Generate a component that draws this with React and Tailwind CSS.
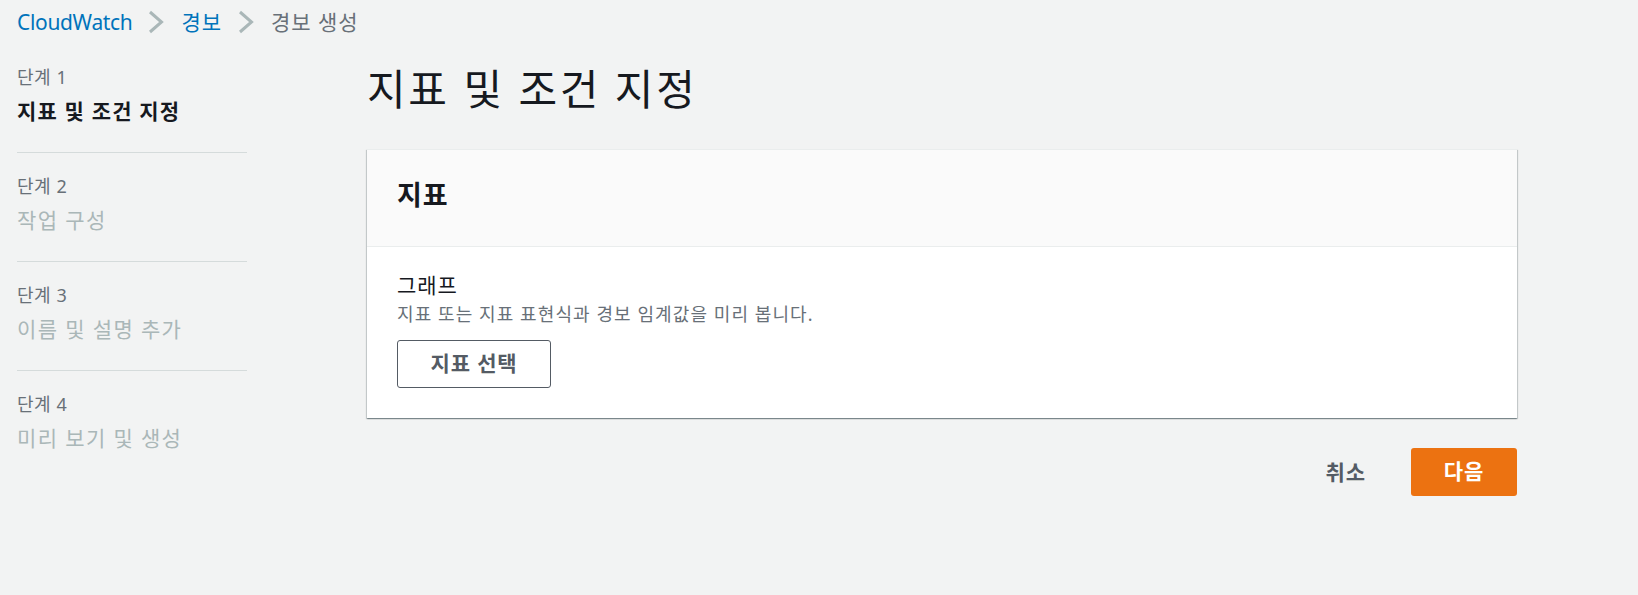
import React from "react";

const FONT = { fontFamily: "'Noto Sans', 'Noto Sans CJK KR', sans-serif" };

function Chevron() {
  return (
    <svg width="16" height="24" viewBox="0 0 16 24" className="shrink-0">
      <polyline points="2,2 13.5,12 2,22" fill="none" stroke="#aab7b8" strokeWidth="3" />
    </svg>
  );
}

const steps = [
  { label: "단계 1", title: "지표 및 조건 지정", active: true },
  { label: "단계 2", title: "작업 구성" },
  { label: "단계 3", title: "이름 및 설명 추가" },
  { label: "단계 4", title: "미리 보기 및 생성" },
];

export default function App() {
  return (
    <div className="min-h-[595px] w-full bg-[#f2f3f3] pl-[17px] pr-[121px] pt-[7px] tracking-[0.06em]" style={FONT}>
      {/* Breadcrumb */}
      <nav className="flex h-[30px] items-center text-[21px] leading-[30px]">
        <span className="tracking-[-0.016em] text-[#0073bb]">CloudWatch</span>
        <span className="ml-[16px] mr-[17px] flex items-center"><Chevron /></span>
        <span className="text-[#0073bb]">경보</span>
        <span className="ml-[16px] mr-[17px] flex items-center"><Chevron /></span>
        <span className="text-[#687078]">경보 생성</span>
      </nav>

      <div className="flex">
        {/* Sidebar */}
        <aside className="mt-[27px] w-[230px] shrink-0">
          {steps.map((s, i) => (
            <div
              key={i}
              className={
                (i === 0 ? "pt-0" : "pt-[20px]") +
                " " +
                (i < steps.length - 1 ? "border-b border-[#d5dbdb] pb-[26px]" : "")
              }
            >
              <div className="text-[18px] leading-[27px] tracking-[0.03em] text-[#687078]">{s.label}</div>
              <div
                className={
                  "mt-[5px] text-[21px] leading-[30px] " +
                  (s.active ? "font-bold tracking-[0.055em] text-[#16191f]" : "tracking-[0.065em] text-[#aab7b8]")
                }
              >
                {s.title}
              </div>
            </div>
          ))}
        </aside>

        {/* Main */}
        <main className="ml-[120px] flex-1">
          <h1 className="mt-[22px] text-[42px] font-normal leading-[60px] tracking-[0.065em] text-[#16191f]">지표 및 조건 지정</h1>

          <div className="mt-[30px] border-t border-[#eaeded] bg-white shadow-[0_1px_1px_0_rgba(0,28,36,0.3),1px_1px_1px_0_rgba(0,28,36,0.15),-1px_1px_1px_0_rgba(0,28,36,0.15)]">
            <div className="border-b border-[#eaeded] bg-[#fafafa] px-[30px] pb-[31px] pt-[25px]">
              <h2 className="text-[27px] font-bold leading-[40px] text-[#16191f]">지표</h2>
            </div>
            <div className="px-[30px] pb-[30px] pt-[23px]">
              <div className="text-[21px] leading-[30px] text-[#16191f]">그래프</div>
              <div className="mt-[1px] text-[18px] leading-[27px] tracking-[0.06em] text-[#687078]">
                지표 또는 지표 표현식과 경보 임계값을 미리 봅니다.
              </div>
              <button className="mt-[12px] flex h-[48px] w-[154px] items-center justify-center rounded-[3px] border border-[#545b64] bg-white text-[21px] font-bold tracking-[0.04em] text-[#545b64]">
                지표 선택
              </button>
            </div>
          </div>

          <div className="mt-[30px] flex items-center justify-end">
            <span className="mr-[45px] text-[21px] font-bold leading-[30px] text-[#545b64]">취소</span>
            <button className="flex h-[48px] w-[106px] items-center justify-center rounded-[3px] bg-[#ec7211] text-[21px] font-bold text-white">
              다음
            </button>
          </div>
        </main>
      </div>
    </div>
  );
}
